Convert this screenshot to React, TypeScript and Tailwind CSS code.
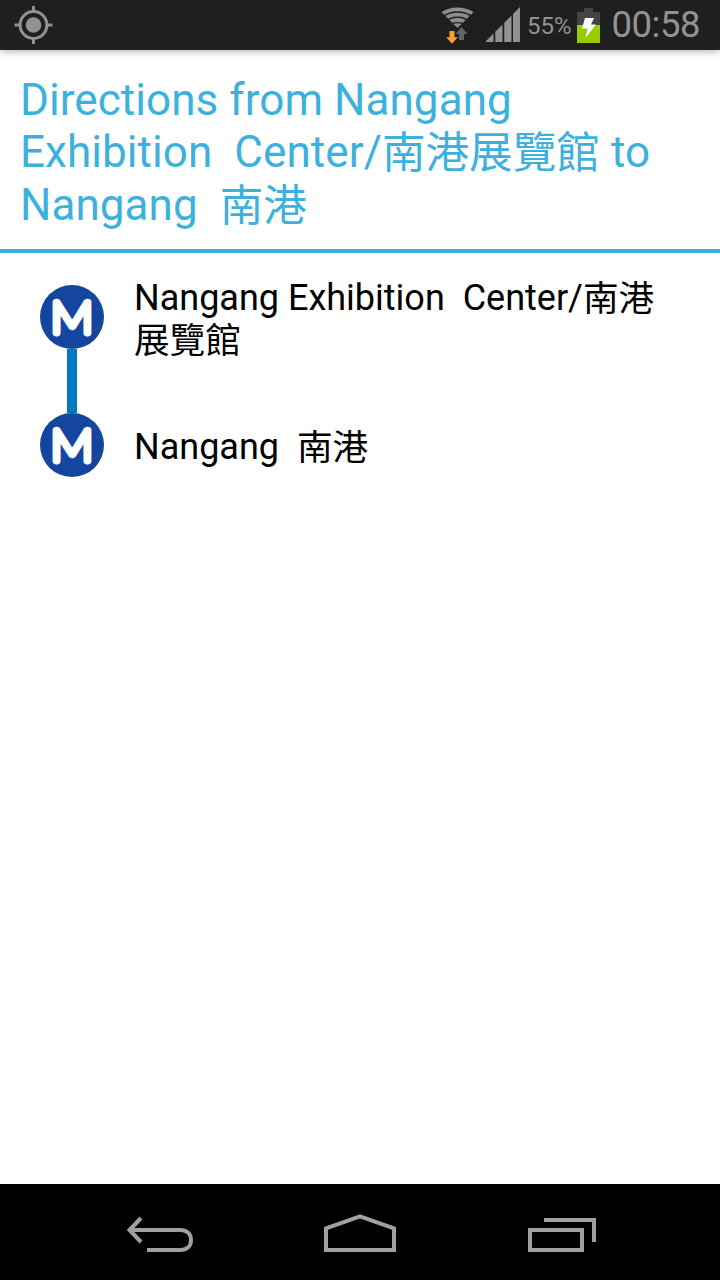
interface Stop {
  id: string;
  name: string;
}

const STOPS: Stop[] = [
  { id: 'exhibition-center', name: 'Nangang Exhibition  Center/南港展覽館' },
  { id: 'nangang', name: 'Nangang  南港' },
];

// Chinese glyphs are set slightly smaller and lower than the Latin text
function StationText({ text }: { text: string }) {
  return (
    <>
      {text.split(/([\u4e00-\u9fff]+)/).map((part, i) =>
        i % 2 === 1 ? (
          <span key={i} className="relative top-px text-[0.99em]">
            {part}
          </span>
        ) : (
          part
        )
      )}
    </>
  );
}

function GpsIcon() {
  return (
    <svg width="40" height="40" viewBox="0 0 40 40" fill="none" stroke="#929292">
      <circle cx="20.500" cy="20" r="13.4" strokeWidth="3" />
      <circle cx="20.500" cy="20" r="7.8" fill="#929292" stroke="none" />
      <path d="M20.500 1v6M20.500 33v6M1.500 20h6M33.500 20h6" strokeWidth="3" />
    </svg>
  );
}

function WifiIcon() {
  return (
    <svg width="34" height="40" viewBox="0 0 34 40" fill="none">
      <clipPath id="wifi-wedge">
        <path d="M.3 7V0h32.400v7L16.500 23z" />
      </clipPath>
      <g clipPath="url(#wifi-wedge)" stroke="#8e8e8e" strokeWidth="3.8">
        <circle cx="16.500" cy="32" r="27.600" />
        <circle cx="16.500" cy="32" r="22.300" />
        <circle cx="16.500" cy="32" r="17" />
        <circle cx="16.500" cy="32" r="13.800" fill="#8e8e8e" stroke="none" />
      </g>
      <path d="M20.500 22l6 7H23v6h-5v-6h-3.500z" fill="#62646a" />
      <path d="M8.500 26h5v6.200h3.400L11 38.700 5.200 32.200h3.300z" fill="#f9a02c" />
    </svg>
  );
}

function SignalIcon() {
  return (
    <svg width="36" height="36" viewBox="0 0 36 36" fill="#929292">
      <path d="M-1 35l8.500-8.500V35zM9.300 35V24.700l7.200-7.200V35zM18.300 35V15.700l7.200-7.200V35zM27 35V7l7-7v35z" />
    </svg>
  );
}

function BatteryIcon() {
  return (
    <svg width="23" height="35" viewBox="0 0 23 35">
      <path d="M7 0h9v4h7v13H0V4h7z" fill="#444" />
      <path d="M0 17h23v18H0z" fill="#99cc00" />
      <path d="M8 10h9l-3 6.500h5L8.500 30l2-9.500H5z" fill="#fff" />
    </svg>
  );
}

function MetroLogo() {
  return (
    <svg width="64" height="64" viewBox="0 0 64 64" className="block">
      <circle cx="32" cy="32" r="32" fill="#1446a0" />
      <text
        transform="translate(32 47.800) scale(1.080 1)"
        textAnchor="middle"
        fontFamily="Lato, sans-serif"
        fontWeight="100"
        fontSize="44"
        fill="#fff"
        stroke="#fff"
        strokeWidth="6.8"
        strokeLinejoin="round"
      >
        M
      </text>
    </svg>
  );
}

function StatusBar() {
  return (
    <header className="relative z-10 flex h-[50px] items-center bg-[#1f1f1f] pl-[13px] pr-5 text-[#929292] shadow-[0_1px_8px_rgba(0,0,0,0.35)]">
      <GpsIcon />
      <div className="ml-auto flex items-center">
        <WifiIcon />
        <div className="ml-[11px]">
          <SignalIcon />
        </div>
        <span className="ml-[5px] w-[47px] whitespace-nowrap pt-0.5 text-[24px] leading-none">55%</span>
        <div className="ml-[3px] mr-2.5">
          <BatteryIcon />
        </div>
        <span className="w-[90px] whitespace-nowrap text-right text-[36.5px] leading-none tracking-[-0.5px]">00:58</span>
      </div>
    </header>
  );
}

function NavBar() {
  return (
    <nav className="flex h-24 items-center justify-between bg-black px-[110px] pb-1 text-[#a0a0a0]">
      {/* Back */}
      <svg width="100" height="60" viewBox="0 0 100 60" fill="none" stroke="currentColor" strokeWidth="4">
        <path d="M20 30h50c7 0 11 4 11 10s-4 10-11 10H37" />
        <path d="M31 18L19.500 30 31 42" />
      </svg>
      {/* Home */}
      <svg width="100" height="60" viewBox="0 0 100 60" fill="none" stroke="currentColor" strokeWidth="4">
        <path d="M16 50V28.300l34-12 34 12V50z" />
      </svg>
      {/* Recent apps */}
      <svg width="100" height="60" viewBox="0 0 100 60" fill="none" stroke="currentColor" strokeWidth="4">
        <path d="M20 30h52v20H20z" />
        <path d="M34 20h50v22" />
      </svg>
    </nav>
  );
}

export default function App() {
  return (
    <div className="flex h-[1280px] w-[720px] flex-col overflow-hidden bg-white font-[Roboto,'Noto_Sans_CJK_TC',sans-serif]">
      <StatusBar />

      <h1 className="h-[203px] whitespace-pre-wrap border-b-4 border-[#41aedb] px-5 pt-6 text-[44px] font-normal leading-[52px] tracking-[0.07px] text-[#3db1de]">
        <StationText text="Directions from Nangang Exhibition  Center/南港展覽館 to Nangang  南港" />
      </h1>

      <main className="flex-1">
        {STOPS.map((stop, i) => (
          <div key={stop.id} className="flex h-32">
            <div className="ml-10 flex w-16 flex-col items-center">
              <div className={`w-2.5 flex-1 ${i > 0 ? 'bg-[#0079c2]' : ''}`} />
              <MetroLogo />
              <div className={`w-2.5 flex-1 ${i < STOPS.length - 1 ? 'bg-[#0079c2]' : ''}`} />
            </div>
            <p className="ml-[30px] mr-10 flex-1 self-center whitespace-pre-wrap break-words pt-1 text-[36px] leading-[42px] text-black">
              <StationText text={stop.name} />
            </p>
          </div>
        ))}
      </main>

      <NavBar />
    </div>
  );
}
